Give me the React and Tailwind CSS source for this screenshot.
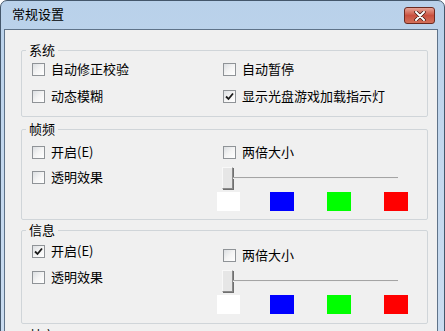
import React from 'react';

const font = { fontFamily: '"Noto Sans CJK SC", "Noto Sans", sans-serif' };

function Check({ checked }) {
  return (
    <span className="w-[13px] h-[13px] border border-[#8f9397] bg-gradient-to-br from-[#dcdfe2] via-[#f4f4f4] to-white flex items-center justify-center shrink-0">
      {checked && (
        <svg width="9" height="9" viewBox="0 0 9 9">
          <path d="M1 4.5 L3.5 7 L8 1.5" fill="none" stroke="#1a1a1a" strokeWidth="1.8" />
        </svg>
      )}
    </span>
  );
}

function Option({ label, checked, className = '' }) {
  return (
    <div className={`flex items-center h-[22px] gap-[6px] ${className}`}>
      <Check checked={checked} />
      <span className="text-[13px] leading-[16px] text-black">{label}</span>
    </div>
  );
}

function Slider() {
  return (
    <div className="flex items-center ml-[5px] h-[22px]">
      <div className="w-[11px] h-[22px] border border-[#8a8a8a] border-l-[#f8f8f8] border-t-[#f8f8f8] bg-[#e6e6e6] shadow-[1px_1px_0_#6f6f6f]" />
      <div className="w-[165px] h-[2px] bg-[#a4a4a4] border-b border-[#ededed]" />
    </div>
  );
}

function Swatches() {
  return (
    <div className="flex items-start h-[19px]">
      <div className="w-[23px] h-[19px] bg-white" />
      <div className="w-[24px] h-[19px] bg-[#0000ff] ml-[30px]" />
      <div className="w-[24px] h-[19px] bg-[#00ff00] ml-[33px]" />
      <div className="w-[24px] h-[19px] bg-[#ff0000] ml-[33px]" />
    </div>
  );
}

function Group({ title, className = '', children }) {
  return (
    <fieldset className={`ml-[16px] mr-[9px] border border-[#d0d5d9] rounded-[2px] ${className}`}>
      <legend className="ml-[4px] px-[3px] text-[13px] leading-[16px] text-black">{title}</legend>
      {children}
    </fieldset>
  );
}

function FrameGroup({ title, enabled, className, rightTop, rowGap }) {
  return (
    <Group title={title} className={className}>
      <div className="grid grid-cols-[185px_1fr] pl-[10px]">
        <div className={`flex flex-col ${rowGap}`}>
          <Option label="开启(E)" checked={enabled} />
          <Option label="透明效果" />
        </div>
        <div className={`flex flex-col ${rightTop}`}>
          <Option label="两倍大小" className="pl-[6px]" />
          <div className="mt-[4px]">
            <Slider />
          </div>
          <div className="mt-[3px]">
            <Swatches />
          </div>
        </div>
      </div>
    </Group>
  );
}

export default function App() {
  return (
    <div style={font} className="w-[445px] h-[331px] overflow-hidden">
      <div className="w-[445px] h-[340px] flex flex-col border border-[#44576b] rounded-t-[7px] bg-gradient-to-b from-[#b9d1ea] via-[#c4d8ee] to-[#cadcf0]">
        {/* Title bar */}
        <div className="h-[28px] flex items-start justify-between pl-[11px] pr-[9px] shrink-0">
          <span className="text-[13px] leading-[16px] mt-[5px] text-black">常规设置</span>
          <button className="mt-[6px] w-[31px] h-[17px] rounded-[3px] border border-[#6b2a20] bg-gradient-to-b from-[#e6a497] via-[#c9503f] to-[#d2705a] flex items-center justify-center">
            <svg width="12" height="10" viewBox="0 0 12 10">
              <path d="M2 1 L10 9 M10 1 L2 9" stroke="#3c1710" strokeWidth="3.4" strokeLinecap="round" />
              <path d="M2 1 L10 9 M10 1 L2 9" stroke="#ffffff" strokeWidth="2" strokeLinecap="round" />
            </svg>
          </button>
        </div>

        {/* Body */}
        <div className="ml-[3px] mr-[6px] flex-1 border border-[#5f7389] bg-[#f0f0f0] pt-[12px]">
          <Group title="系统">
            <div className="grid grid-cols-[185px_1fr] pl-[10px] pb-[9px] gap-y-[5px]">
              <Option label="自动修正校验" />
              <Option label="自动暂停" className="pl-[6px]" />
              <Option label="动态模糊" />
              <Option label="显示光盘游戏加载指示灯" checked className="pl-[6px]" />
            </div>
          </Group>

          <FrameGroup title="帧频" className="mt-[4px] pt-[4px] pb-[8px]" rowGap="gap-[3px]" rightTop="" />

          <FrameGroup title="信息" enabled className="mt-[2px] pt-[2px] pb-[9px]" rowGap="gap-[4px]" rightTop="mt-[4px]" />

          <Group title="其它" className="mt-[3px] h-[40px]" />
        </div>
      </div>
    </div>
  );
}
